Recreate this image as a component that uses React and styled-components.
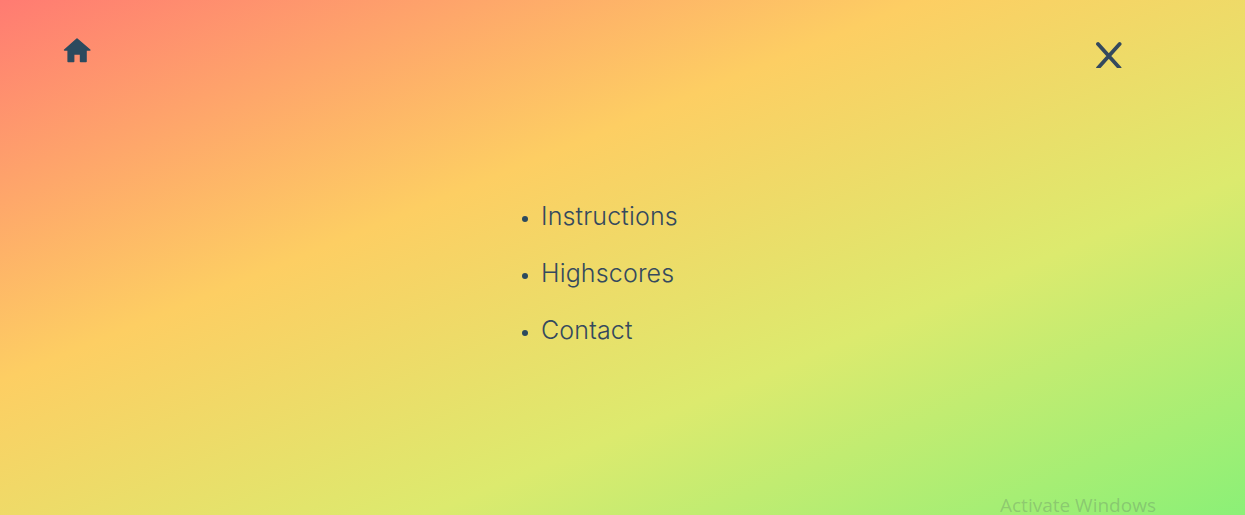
import styled, { createGlobalStyle } from 'styled-components'

const GlobalStyle = createGlobalStyle`
    html, body {
        margin: 0;
        padding: 0;
        height: 100%;
        overflow: hidden;
    }
`

const Page = styled.div`
    position: relative;
    height: 100vh;
    overflow: hidden;
    font-family: "Inter", "Open Sans", sans-serif;
    color: #34495e;
    background: linear-gradient(to bottom right, #ff7b72 0%, #fdce63 37%, #dcea6e 67%, #8bf077 100%);
`

const TopBar = styled.header`
    display: flex;
    justify-content: space-between;
    align-items: flex-start;
    padding: 35px 120px 0 62px;
`

const IconButton = styled.button`
    display: block;
    width: ${props => props.size}px;
    height: ${props => props.size}px;
    margin-top: ${props => props.offset || 0}px;
    padding: 0;
    border: 0;
    background: none;
    color: ${props => props.color || 'inherit'};
    cursor: pointer;

    svg {
        display: block;
    }
`

const MenuList = styled.ul`
    margin: 134px 0 0 501px;
    padding: 0 0 0 40px;
    list-style: disc;
`

const MenuItem = styled.li`
    height: 57px;
    line-height: 34px;
    font-size: 25px;
    font-weight: 350;
    letter-spacing: 0.15px;

    &::marker {
        font-size: 19px;
        color: #2c4a5e;
    }
`

const Watermark = styled.div`
    position: absolute;
    left: 1000px;
    top: 496px;
    font-family: "Open Sans", sans-serif;
    font-size: 19px;
    line-height: 19px;
    color: rgba(90, 110, 100, 0.3);
    white-space: nowrap;
`

const HomeIcon = () => (
    <svg width="30" height="28" viewBox="0 0 30 28">
        <path
            fill="currentColor"
            stroke="currentColor"
            strokeWidth="1.6"
            strokeLinejoin="round"
            d="M15 3 L27.8 14 H24 V25.4 H18.6 V18 H11.6 V25.4 H6.2 V14 H2.6 Z"
        />
    </svg>
)

const CloseIcon = () => (
    <svg width="30" height="33" viewBox="0 0 30 33">
        <path
            fill="none"
            stroke="currentColor"
            strokeWidth="3.8"
            strokeLinecap="round"
            d="M3 9 L24.6 33 M24.6 9 L3 33"
        />
    </svg>
)

const items = ['Instructions', 'Highscores', 'Contact']

const App = () => {
    return (
        <Page>
            <GlobalStyle />
            <TopBar>
                <IconButton size={30} color="#2c4a5e" aria-label="Home"><HomeIcon /></IconButton>
                <IconButton size={30} aria-label="Close"><CloseIcon /></IconButton>
            </TopBar>
            <MenuList>
                {items.map(item => <MenuItem key={item}>{item}</MenuItem>)}
            </MenuList>
            <Watermark>Activate Windows</Watermark>
        </Page>
    )
}

export default App
